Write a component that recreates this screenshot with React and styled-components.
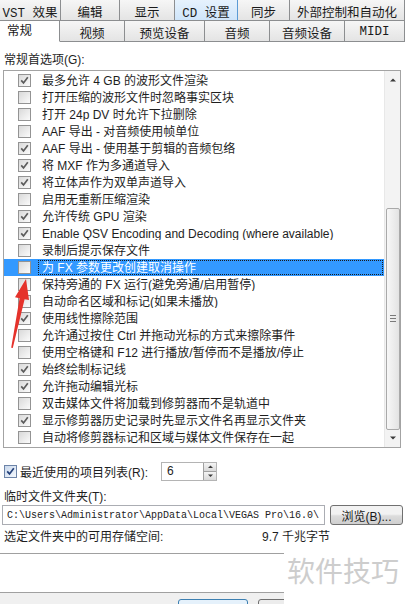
import React from 'react';
import styled, { createGlobalStyle } from 'styled-components';

const UI_FONT = `"Liberation Sans", "Noto Sans CJK SC", sans-serif`;
const MONO_FONT = `"Liberation Mono", "Noto Sans CJK SC", monospace`;

const GlobalStyle = createGlobalStyle`
    body {
        margin: 0;
        background: #fff;
    }
`;

const Dialog = styled.div`
    position: relative;
    width: 405px;
    height: 604px;
    overflow: hidden;
    background: #fff;
    font-family: ${UI_FONT};
    font-size: 12px;
    color: #1e1e1e;
`;

const TabRow = styled.div`
    display: flex;
    height: 21px;
`;

const Tab = styled.div`
    flex: 0 0 ${p => p.$w}px;
    box-sizing: border-box;
    display: flex;
    align-items: center;
    justify-content: ${p => (p.$active ? 'flex-start' : 'center')};
    padding: ${p => (p.$active ? '0 0 3px 7px' : '2px 0 0 0')};
    border-right: 1px solid ${p => (p.$hot ? '#5b9bd5' : '#8c8e90')};
    border-bottom: 1px solid ${p => (p.$active ? 'transparent' : '#8c8e90')};
    background: ${p =>
        p.$active
            ? '#fff'
            : p.$hot
            ? 'linear-gradient(#e6f2fd, #cfe5fa)'
            : 'linear-gradient(#f6f6f6, #e4e4e4)'};
    font-family: ${MONO_FONT};
    font-size: 12.5px;
    color: #1a1a1a;
    white-space: nowrap;
`;

const Page = styled.div`
    display: flex;
    flex-direction: column;
`;

const Heading = styled.div`
    margin: 10px 0 0 4px;
    line-height: 16px;
    height: 16px;
`;

const ListBox = styled.div`
    margin: 2px 4px 0 3px;
    height: 378px;
    box-sizing: border-box;
    border: 1px solid #a3a3a3;
    display: flex;
`;

const Items = styled.div`
    flex: 1;
    padding-top: 1px;
    min-width: 0;
`;

const Row = styled.div`
    height: 17px;
    display: flex;
    align-items: center;
    padding-left: 14px;
    background: ${p => (p.$selected ? '#3399ff' : 'transparent')};
    color: ${p => (p.$selected ? '#fff' : '#1e1e1e')};
`;

const RowLabel = styled.span`
    flex: 1;
    height: 15px;
    line-height: 15px;
    box-sizing: border-box;
    margin: 0 1px 0 7px;
    padding-left: 3px;
    border: 1px dotted ${p => (p.$focus ? '#1a1a1a' : 'transparent')};
    white-space: nowrap;
    overflow: hidden;
`;

const Box = styled.span`
    flex: none;
    width: 13px;
    height: 13px;
    box-sizing: border-box;
    display: inline-flex;
    align-items: center;
    justify-content: center;
    border: 1px solid ${p => (p.$blue ? '#6d84a8' : '#939393')};
    background: ${p =>
        p.$blue
            ? 'linear-gradient(135deg, #c9d8ec, #f4f8fd)'
            : 'linear-gradient(135deg, #d9d9d9, #fbfbfb)'};
`;

const Scrollbar = styled.div`
    flex: 0 0 16px;
    display: flex;
    flex-direction: column;
    align-items: stretch;
    background: #f3f3f3;
    border-left: 1px solid #e8e8e8;
    box-sizing: border-box;
`;

const ScrollArrow = styled.div`
    height: 18px;
    display: flex;
    align-items: center;
    justify-content: center;
`;

const Track = styled.div`
    flex: 1;
    display: flex;
    flex-direction: column;
    padding: 0 0 0 1px;
`;

const Thumb = styled.div`
    margin-top: 119px;
    height: 222px;
    box-sizing: border-box;
    border: 1px solid #a9a9a9;
    border-radius: 2px;
    background: linear-gradient(90deg, #f7f7f7, #e3e3e3);
    display: flex;
    align-items: center;
    justify-content: center;
`;

const Grip = styled.div`
    width: 6px;
    height: 7px;
    background: repeating-linear-gradient(#7a7a7a 0 1px, transparent 1px 3px);
`;

const Recent = styled.div`
    margin: 14px 0 0 4px;
    height: 19px;
    display: flex;
    align-items: center;
`;

const RecentLabel = styled.span`
    flex: 0 0 141px;
    margin-left: 3px;
`;

const Spinner = styled.div`
    width: 56px;
    height: 19px;
    box-sizing: border-box;
    border: 1px solid #b4b4b4;
    display: flex;
`;

const SpinValue = styled.span`
    flex: 1;
    padding: 1px 0 0 5px;
    font-size: 12px;
`;

const SpinButtons = styled.div`
    flex: 0 0 12px;
    display: flex;
    flex-direction: column;
    border-left: 1px solid #a0a0a0;
`;

const SpinButton = styled.div`
    flex: 1;
    display: flex;
    align-items: center;
    justify-content: center;
    background: linear-gradient(#f4f4f4, #d9d9d9);
    & + & {
        border-top: 1px solid #a0a0a0;
    }
`;

const Label = styled.div`
    margin: ${p => p.$top}px 0 0 4px;
    height: 16px;
    line-height: 16px;
`;

const PathRow = styled.div`
    margin: 0 2px 0 2px;
    height: 20px;
    display: flex;
    gap: 5px;
`;

const PathField = styled.div`
    flex: 0 0 323px;
    box-sizing: border-box;
    border: 1px solid #abadb3;
    padding: 0 0 0 4px;
    display: flex;
    align-items: center;
    font-family: ${MONO_FONT};
    font-size: 10px;
    color: #222;
    white-space: nowrap;
    overflow: hidden;
`;

const Button = styled.div`
    flex: 1;
    box-sizing: border-box;
    border: 1px solid #707070;
    border-radius: 3px;
    background: linear-gradient(#f2f2f2 45%, #dcdcdc 55%, #cfcfcf);
    display: flex;
    align-items: center;
    justify-content: center;
    color: #1a1a1a;
`;

const StorageRow = styled.div`
    margin: 4px 0 0 4px;
    height: 16px;
    line-height: 16px;
    display: flex;
`;

const StorageLabel = styled.span`
    flex: 0 0 258px;
`;

const Separator = styled.div`
    margin-top: ${p => p.$top}px;
    height: 1px;
    background: #a0a0a0;
`;

const ButtonStrip = styled.div`
    height: 12px;
    background: #f0f0f0;
    display: flex;
    padding: 6px 0 0 178px;
    gap: 10px;
    box-sizing: border-box;
`;

const StripButton = styled.div`
    width: ${p => p.$w}px;
    height: 22px;
    box-sizing: border-box;
    border: 1px solid ${p => (p.$default ? '#3c7fb1' : '#707070')};
    border-radius: 3px;
    background: ${p => (p.$default ? '#e5f1fb' : '#ececec')};
`;

const Watermark = styled.div`
    position: absolute;
    right: 0;
    top: 547px;
    width: 121px;
    height: 57px;
    background: #fff;
    padding: 6px 0 0 3px;
    box-sizing: border-box;
    font-family: "Noto Sans CJK SC", sans-serif;
    font-size: 28px;
    line-height: 34px;
    color: #cdcdcd;
    letter-spacing: 0;
`;

const Arrow = styled.svg`
    position: absolute;
    left: 0;
    top: 270px;
    pointer-events: none;
`;

const topTabs = [
    { label: 'VST 效果', w: 61 },
    { label: '编辑', w: 59 },
    { label: '显示', w: 55 },
    { label: 'CD 设置', w: 63, hot: true },
    { label: '同步', w: 52 },
    { label: '外部控制和自动化', w: 115 },
];

const bottomTabs = [
    { label: '常规', w: 60, active: true },
    { label: '视频', w: 65 },
    { label: '预览设备', w: 80 },
    { label: '音频', w: 65 },
    { label: '音频设备', w: 75 },
    { label: 'MIDI', w: 60 },
];

const settings = [
    ['最多允许 4 GB 的波形文件渲染', true],
    ['打开压缩的波形文件时忽略事实区块', false],
    ['打开 24p DV 时允许下拉删除', false],
    ['AAF 导出 - 对音频使用帧单位', false],
    ['AAF 导出 - 使用基于剪辑的音频包络', true],
    ['将 MXF 作为多通道导入', true],
    ['将立体声作为双单声道导入', true],
    ['启用无重新压缩渲染', false],
    ['允许传统 GPU 渲染', true],
    ['Enable QSV Encoding and Decoding (where available)', true],
    ['录制后提示保存文件', false],
    ['为 FX 参数更改创建取消操作', false],
    ['保持旁通的 FX 运行(避免旁通/启用暂停)', false],
    ['自动命名区域和标记(如果未播放)', false],
    ['使用线性擦除范围', true],
    ['允许通过按住 Ctrl 并拖动光标的方式来擦除事件', false],
    ['使用空格键和 F12 进行播放/暂停而不是播放/停止', false],
    ['始终绘制标记线', true],
    ['允许拖动编辑光标', true],
    ['双击媒体文件将加载到修剪器而不是轨道中', false],
    ['显示修剪器历史记录时先显示文件名再显示文件夹', true],
    ['自动将修剪器标记和区域与媒体文件保存在一起', false],
];

const SELECTED = 11;

const Check = ({ checked, blue }) => (
    <Box $blue={blue}>
        {checked && (
            <svg width="9" height="9" viewBox="0 0 9 9">
                <path
                    d="M1.2 4.4 L3.5 6.9 L7.8 1.3"
                    fill="none"
                    stroke={blue ? '#23407a' : '#5c5c5c'}
                    strokeWidth="1.7"
                />
            </svg>
        )}
    </Box>
);

const Triangle = ({ up, size = 7 }) => (
    <svg width={size} height={size / 2 + 1} viewBox="0 0 8 5">
        <path d={up ? 'M0 4.5 L4 0.5 L8 4.5 Z' : 'M0 0.5 L4 4.5 L8 0.5 Z'} fill="#3a3a3a" />
    </svg>
);

const App = () => {
    return (
        <Dialog>
            <GlobalStyle />
            <TabRow>
                {topTabs.map(t => (
                    <Tab key={t.label} $w={t.w} $hot={t.hot}>
                        {t.label}
                    </Tab>
                ))}
            </TabRow>
            <TabRow>
                {bottomTabs.map(t => (
                    <Tab key={t.label} $w={t.w} $active={t.active}>
                        {t.label}
                    </Tab>
                ))}
            </TabRow>

            <Page>
                <Heading>常规首选项(G):</Heading>
                <ListBox>
                    <Items>
                        {settings.map(([label, checked], i) => (
                            <Row key={label} $selected={i === SELECTED}>
                                <Check checked={checked} />
                                <RowLabel $focus={i === SELECTED}>{label}</RowLabel>
                            </Row>
                        ))}
                    </Items>
                    <Scrollbar>
                        <ScrollArrow>
                            <Triangle up size={6} />
                        </ScrollArrow>
                        <Track>
                            <Thumb>
                                <Grip />
                            </Thumb>
                        </Track>
                        <ScrollArrow>
                            <Triangle size={6} />
                        </ScrollArrow>
                    </Scrollbar>
                </ListBox>

                <Recent>
                    <Check checked blue />
                    <RecentLabel>最近使用的项目列表(R):</RecentLabel>
                    <Spinner>
                        <SpinValue>6</SpinValue>
                        <SpinButtons>
                            <SpinButton>
                                <Triangle up size={5} />
                            </SpinButton>
                            <SpinButton>
                                <Triangle size={5} />
                            </SpinButton>
                        </SpinButtons>
                    </Spinner>
                </Recent>

                <Label $top={8}>临时文件文件夹(T):</Label>
                <PathRow>
                    <PathField>C:\Users\Administrator\AppData\Local\VEGAS Pro\16.0\</PathField>
                    <Button>浏览(B)...</Button>
                </PathRow>

                <StorageRow>
                    <StorageLabel>选定文件夹中的可用存储空间:</StorageLabel>
                    <span>9.7 千兆字节</span>
                </StorageRow>

                <Separator $top={8} />
                <Separator $top={38} />
                <ButtonStrip>
                    <StripButton $w={70} $default />
                    <StripButton $w={70} />
                </ButtonStrip>
            </Page>

            <Watermark>软件技巧</Watermark>

            <Arrow width="40" height="85" viewBox="0 270 40 85">
                <polygon
                    points="26,279 29,300 24.6,299.2 12.8,348 11.2,347.8 19.6,298.2 15,297.2"
                    fill="#e5322b"
                />
            </Arrow>
        </Dialog>
    );
};

export default App;
